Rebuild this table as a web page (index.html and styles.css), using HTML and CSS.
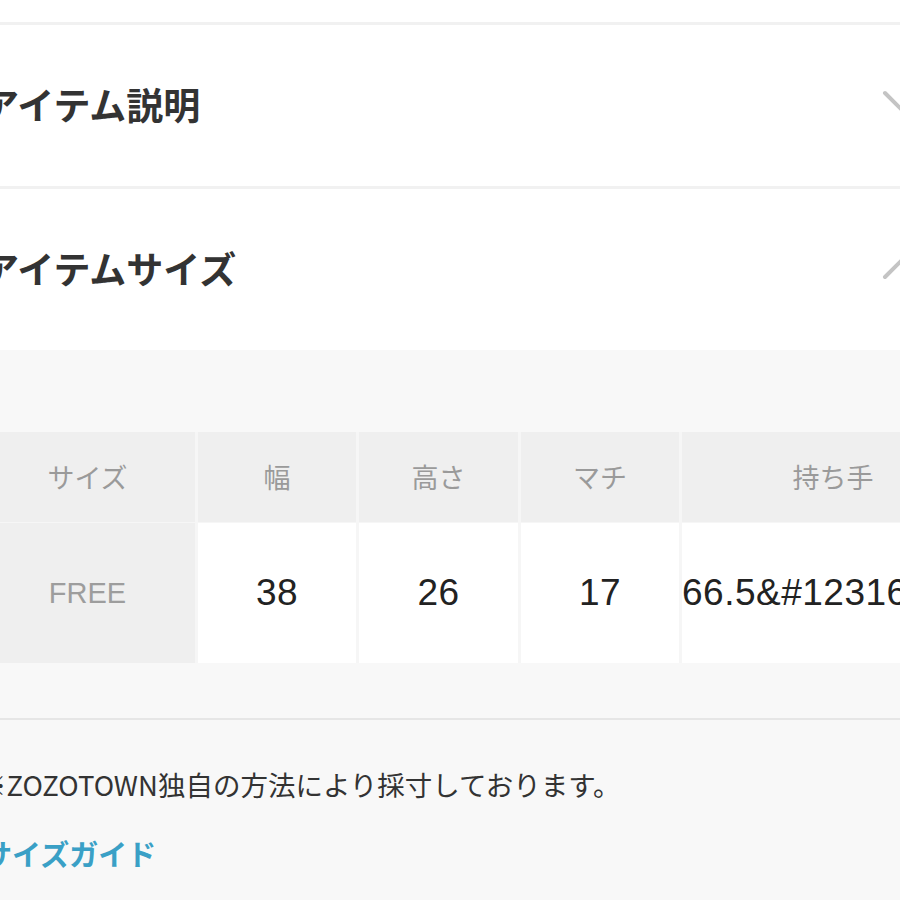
FILE: index.html
```html
<!DOCTYPE html>
<html lang="ja">
<head>
<meta charset="utf-8">
<link rel="stylesheet" href="styles.css">
</head>
<body>
<div class="page">
  <div class="top"></div>
  <section class="acc">
    <h2 class="acc-title">アイテム説明</h2>
    <svg class="chev" width="60" height="60" viewBox="0 0 60 60"><polyline points="5,15 30,40 55,15" /></svg>
  </section>
  <section class="acc">
    <h2 class="acc-title">アイテムサイズ</h2>
    <svg class="chev up" width="60" height="60" viewBox="0 0 60 60"><polyline points="5,40 30,15 55,40" /></svg>
  </section>
  <div class="size-area">
    <div class="size-table">
      <div class="cell head first">サイズ</div>
      <div class="cell head">幅</div>
      <div class="cell head">高さ</div>
      <div class="cell head">マチ</div>
      <div class="cell head">持ち手</div>
      <div class="cell first free">FREE</div>
      <div class="cell val">38</div>
      <div class="cell val">26</div>
      <div class="cell val">17</div>
      <div class="cell val long">66.5&amp;#12316;75</div>
    </div>
    <div class="divider"></div>
    <p class="note">※ZOZOTOWN独自の方法により採寸しております。</p>
    <a class="guide" href="#">サイズガイド</a>
  </div>
</div>
</body>
</html>
```

FILE: styles.css
```css
html, body {
  margin: 0;
  padding: 0;
  background: #f8f8f8;
  overflow: hidden;
  width: 900px;
  height: 900px;
}
.page {
  width: 900px;
  font-family: "Noto Sans CJK JP", sans-serif;
}
.top {
  height: 22px;
  background: #fff;
  border-bottom: 3px solid #f1f1f1;
}
.acc {
  position: relative;
  height: 161px;
  background: #fff;
  border-bottom: 3px solid #f1f1f1;
  display: flex;
  align-items: center;
}
.acc + .acc {
  border-bottom: none;
}
.acc-title {
  margin: 0 0 3px -18px;
  font-size: 37px;
  font-weight: 700;
  color: #333;
  letter-spacing: 0;
  line-height: 1;
}
.chev {
  position: absolute;
  right: -40px;
  top: 53px;
}
.chev.up {
  top: 48px;
}
.chev polyline {
  fill: none;
  stroke: #c4c4c4;
  stroke-width: 4;
  stroke-linecap: round;
}
.size-area {
  padding-top: 82px;
  background: #f8f8f8;
}
.size-table {
  display: grid;
  grid-template-columns: 215px 158px 159px 158px 302px;
  grid-template-rows: 90px 140px;
  column-gap: 3px;
  row-gap: 1px;
  background: #f6f6f6;
  width: 1004px;
  margin-left: -20px;
}
.cell {
  display: flex;
  align-items: center;
  justify-content: center;
  white-space: nowrap;
  overflow: hidden;
}
.head {
  background: #efefef;
  color: #9a9a9a;
  font-size: 27px;
  padding-bottom: 2px;
}
.first {
  background: #efefef;
}
.free {
  color: #9d9d9d;
  font-family: "Liberation Sans", "Noto Sans CJK JP", sans-serif;
  font-size: 29px;
}
.val {
  background: #fff;
  color: #222;
  font-family: "Liberation Sans", "Noto Sans CJK JP", sans-serif;
  font-size: 37px;
  letter-spacing: 0.5px;
}
.long {
  justify-content: flex-start;
  padding-left: 0;
}
.divider {
  margin-top: 55px;
  height: 2px;
  background: #e6e6e6;
}
.note {
  margin: 46px 0 0 -21px;
  font-size: 27.5px;
  color: #333;
  line-height: 36px;
}
.guide {
  display: block;
  margin: 33px 0 0 -17px;
  font-size: 29px;
  font-weight: 700;
  color: #3aa0c6;
  text-decoration: none;
  line-height: 36px;
}
```
